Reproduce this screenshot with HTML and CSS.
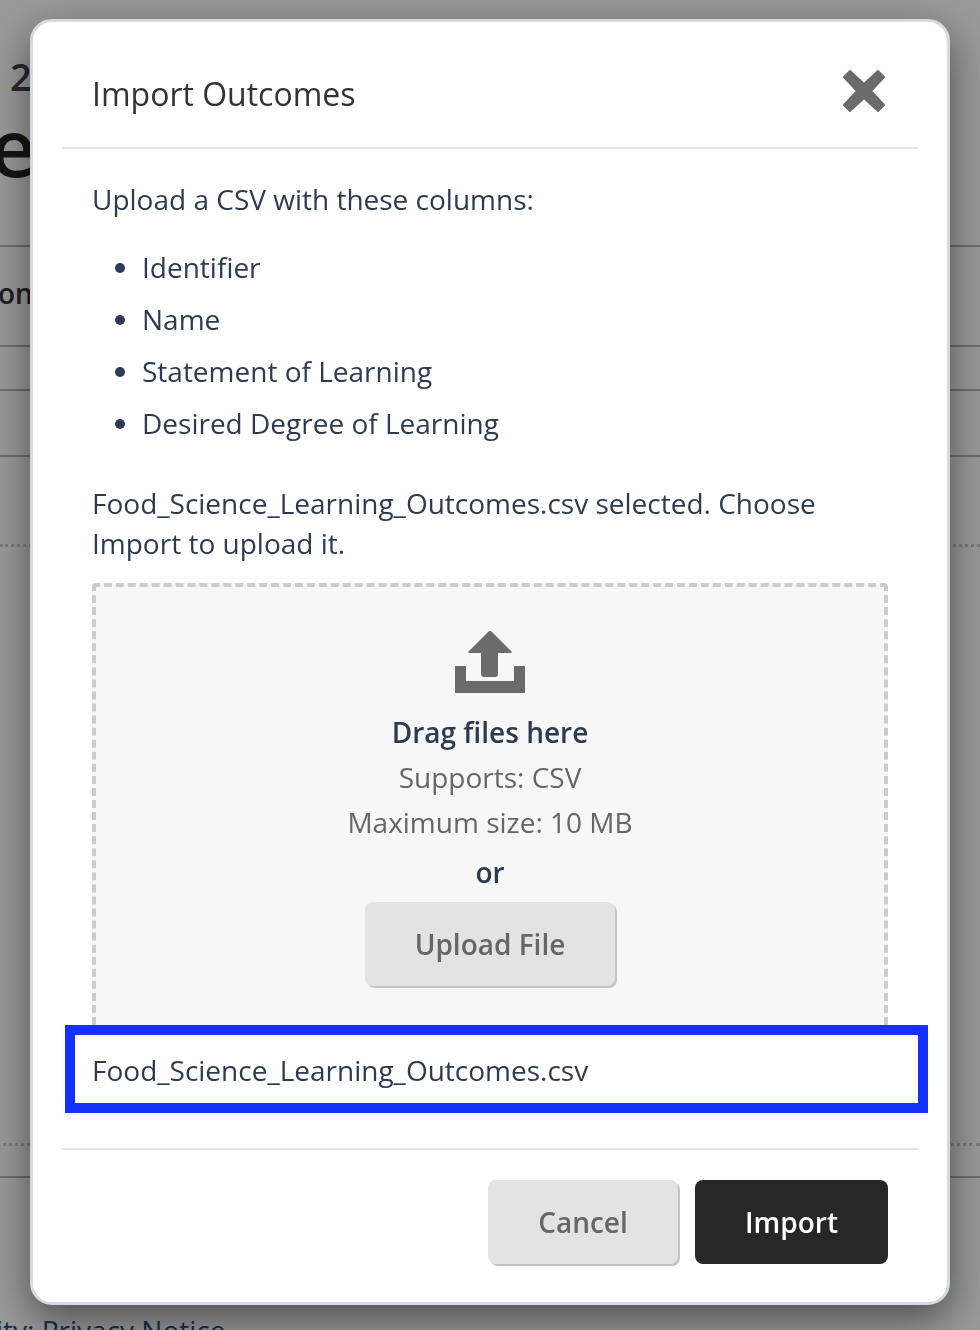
FILE: index.html
```html
<!DOCTYPE html>
<html lang="en">

<head>
    <meta charset="UTF-8">
    <meta name="viewport" content="width=device-width, initial-scale=1.0">
    <title>Import Outcomes</title>
    <link rel="stylesheet" href="styles.css">
</head>

<body>
    <div class="page">
        <div class="pageYear">2</div>
        <div class="pageTitle">e</div>
        <div class="pageTabs">on</div>
        <div class="pageRow rowA"></div>
        <div class="pageRow rowB"></div>
        <div class="pageRow rowC"></div>
        <div class="pageFooter">ity: Privacy Notice</div>
    </div>

    <div class="overlay">
        <section class="modal">
            <header class="modalHeader">
                <h2 class="modalTitle">Import Outcomes</h2>
                <svg class="closeIcon" viewBox="0 0 42 42" aria-label="Close">
                    <path d="M7 1 21 14 35 1 41 7 28 21 41 35 35 41 21 28 7 41 1 35 14 21 1 7Z" />
                </svg>
            </header>
            <div class="modalBody">
                <p class="intro">Upload a CSV with these columns:</p>
                <ul class="columnList">
                    <li>Identifier</li>
                    <li>Name</li>
                    <li>Statement of Learning</li>
                    <li>Desired Degree of Learning</li>
                </ul>
                <p class="status">Food_Science_Learning_Outcomes.csv selected. Choose Import to upload it.</p>
                <div class="dropzone">
                    <svg class="uploadIcon" viewBox="0 0 70 62">
                        <path d="M0 35H11V50H59V35H70V62H0Z" />
                        <path d="M33 1Q35-1 37 1L56 20Q58 22 55 22H43V43Q43 46 40 46H29Q26 46 26 43V22H15Q12 22 14 20Z" />
                    </svg>
                    <div class="dropTitle">Drag files here</div>
                    <div class="dropNote">Supports: CSV</div>
                    <div class="dropNote">Maximum size: 10 MB</div>
                    <div class="dropOr">or</div>
                    <button class="btn btnGrey uploadBtn">Upload File</button>
                </div>
                <div class="fileName">Food_Science_Learning_Outcomes.csv</div>
            </div>
            <footer class="modalFooter">
                <button class="btn btnGrey cancelBtn">Cancel</button>
                <button class="btn btnDark">Import</button>
            </footer>
        </section>
    </div>
</body>

</html>
```

FILE: styles.css
```css
* {
    margin: 0;
    padding: 0;
    box-sizing: border-box;
}

html,
body {
    height: 100%;
    overflow: hidden;
}

body {
    font-family: "Open Sans", "Noto Sans", sans-serif;
    font-size: 28px;
    line-height: 40px;
    color: #2d3b52;
    background: #fff;
}

/* page behind the dialog */
.page {
    height: 1330px;
    color: #222;
    overflow: hidden;
}

.pageYear {
    padding: 55px 0 0 10px;
    height: 96px;
    font-size: 38px;
    line-height: 42px;
    font-weight: 600;
    color: #444;
}

.pageTitle {
    margin-left: -10px;
    height: 151px;
    padding-top: 2px;
    font-size: 80px;
    line-height: 96px;
    font-weight: 600;
    border-bottom: 2px solid #b5b5b5;
}

.pageTabs {
    margin-left: -2px;
    height: 100px;
    padding-top: 26px;
    font-weight: 600;
    color: #333;
    border-bottom: 2px solid #b5b5b5;
}

.pageRow {
    border-bottom: 2px solid #b5b5b5;
}

.rowA {
    height: 44px;
}

.rowB {
    height: 66px;
}

.rowC {
    height: 90px;
    border-bottom: 3px dotted #ccc;
}

.pageFooter {
    margin-top: 596px;
    height: 190px;
    padding-top: 164px;
    margin-left: -4px;
    color: #23508f;
    border-top: 3px dotted #ccc;
    background: linear-gradient(#b5b5b5, #b5b5b5) 0 30px / 100% 2px no-repeat;
}

/* dialog */
.overlay {
    position: fixed;
    inset: 0;
    padding: 19px 30px;
    background: rgba(0, 0, 0, .4);
}

.modal {
    height: 1286px;
    background: #fff;
    border: 3px solid #d5dae2;
    border-radius: 22px;
    box-shadow: 0 14px 40px rgba(0, 0, 0, .5);
    padding: 0 29px;
}

.modalHeader {
    display: flex;
    align-items: flex-start;
    justify-content: space-between;
    height: 127px;
    padding: 52px 33px 0 30px;
    border-bottom: 2px solid #e3e3e3;
}

.modalTitle {
    font-size: 32px;
    line-height: 40px;
    font-weight: 400;
    color: #333;
}

.closeIcon {
    width: 42px;
    height: 42px;
    margin-top: -4px;
    fill: #6b6b6b;
    stroke: #6b6b6b;
    stroke-width: 2;
    stroke-linejoin: round;
}

.modalBody {
    padding: 30px 30px 0;
}

.columnList {
    list-style: disc;
    margin: 28px 0 40px;
    padding-left: 50px;
}

.columnList li {
    margin-bottom: 12px;
}

.columnList li:last-child {
    margin-bottom: 0;
}

.dropzone {
    display: flex;
    flex-direction: column;
    align-items: center;
    height: 442px;
    margin-top: 20px;
    padding-top: 44px;
    background: #f7f7f7;
    border: 4px dashed #ccc;
    border-bottom: none;
    border-radius: 4px 4px 0 0;
}

.uploadIcon {
    width: 70px;
    height: 62px;
    fill: #6b6b6b;
}

.dropTitle {
    margin-top: 19px;
    font-weight: 600;
}

.dropNote {
    margin-top: 5px;
    color: #666;
}

.dropOr {
    margin-top: 10px;
    font-weight: 600;
}

.btn {
    font-family: inherit;
    font-size: 28px;
    line-height: 40px;
    font-weight: 600;
    border: none;
    border-radius: 8px;
}

.btnGrey {
    background: #e3e3e3;
    color: #666;
    box-shadow: 2px 2px 0 #c4c4c4;
}

.btnDark {
    width: 193px;
    height: 84px;
    background: #272727;
    color: #fff;
}

.uploadBtn {
    width: 250px;
    height: 84px;
    margin-top: 10px;
}

.fileName {
    height: 88px;
    margin: 0 -40px 0 -27px;
    padding: 15px 0 0 17px;
    background: #fff;
    border: 10px solid #1531ff;
    line-height: 40px;
}

.modalFooter {
    display: flex;
    justify-content: flex-end;
    gap: 17px;
    margin-top: 35px;
    padding: 30px 30px 0 0;
    border-top: 2px solid #e3e3e3;
}

.cancelBtn {
    width: 190px;
    height: 84px;
}
```
